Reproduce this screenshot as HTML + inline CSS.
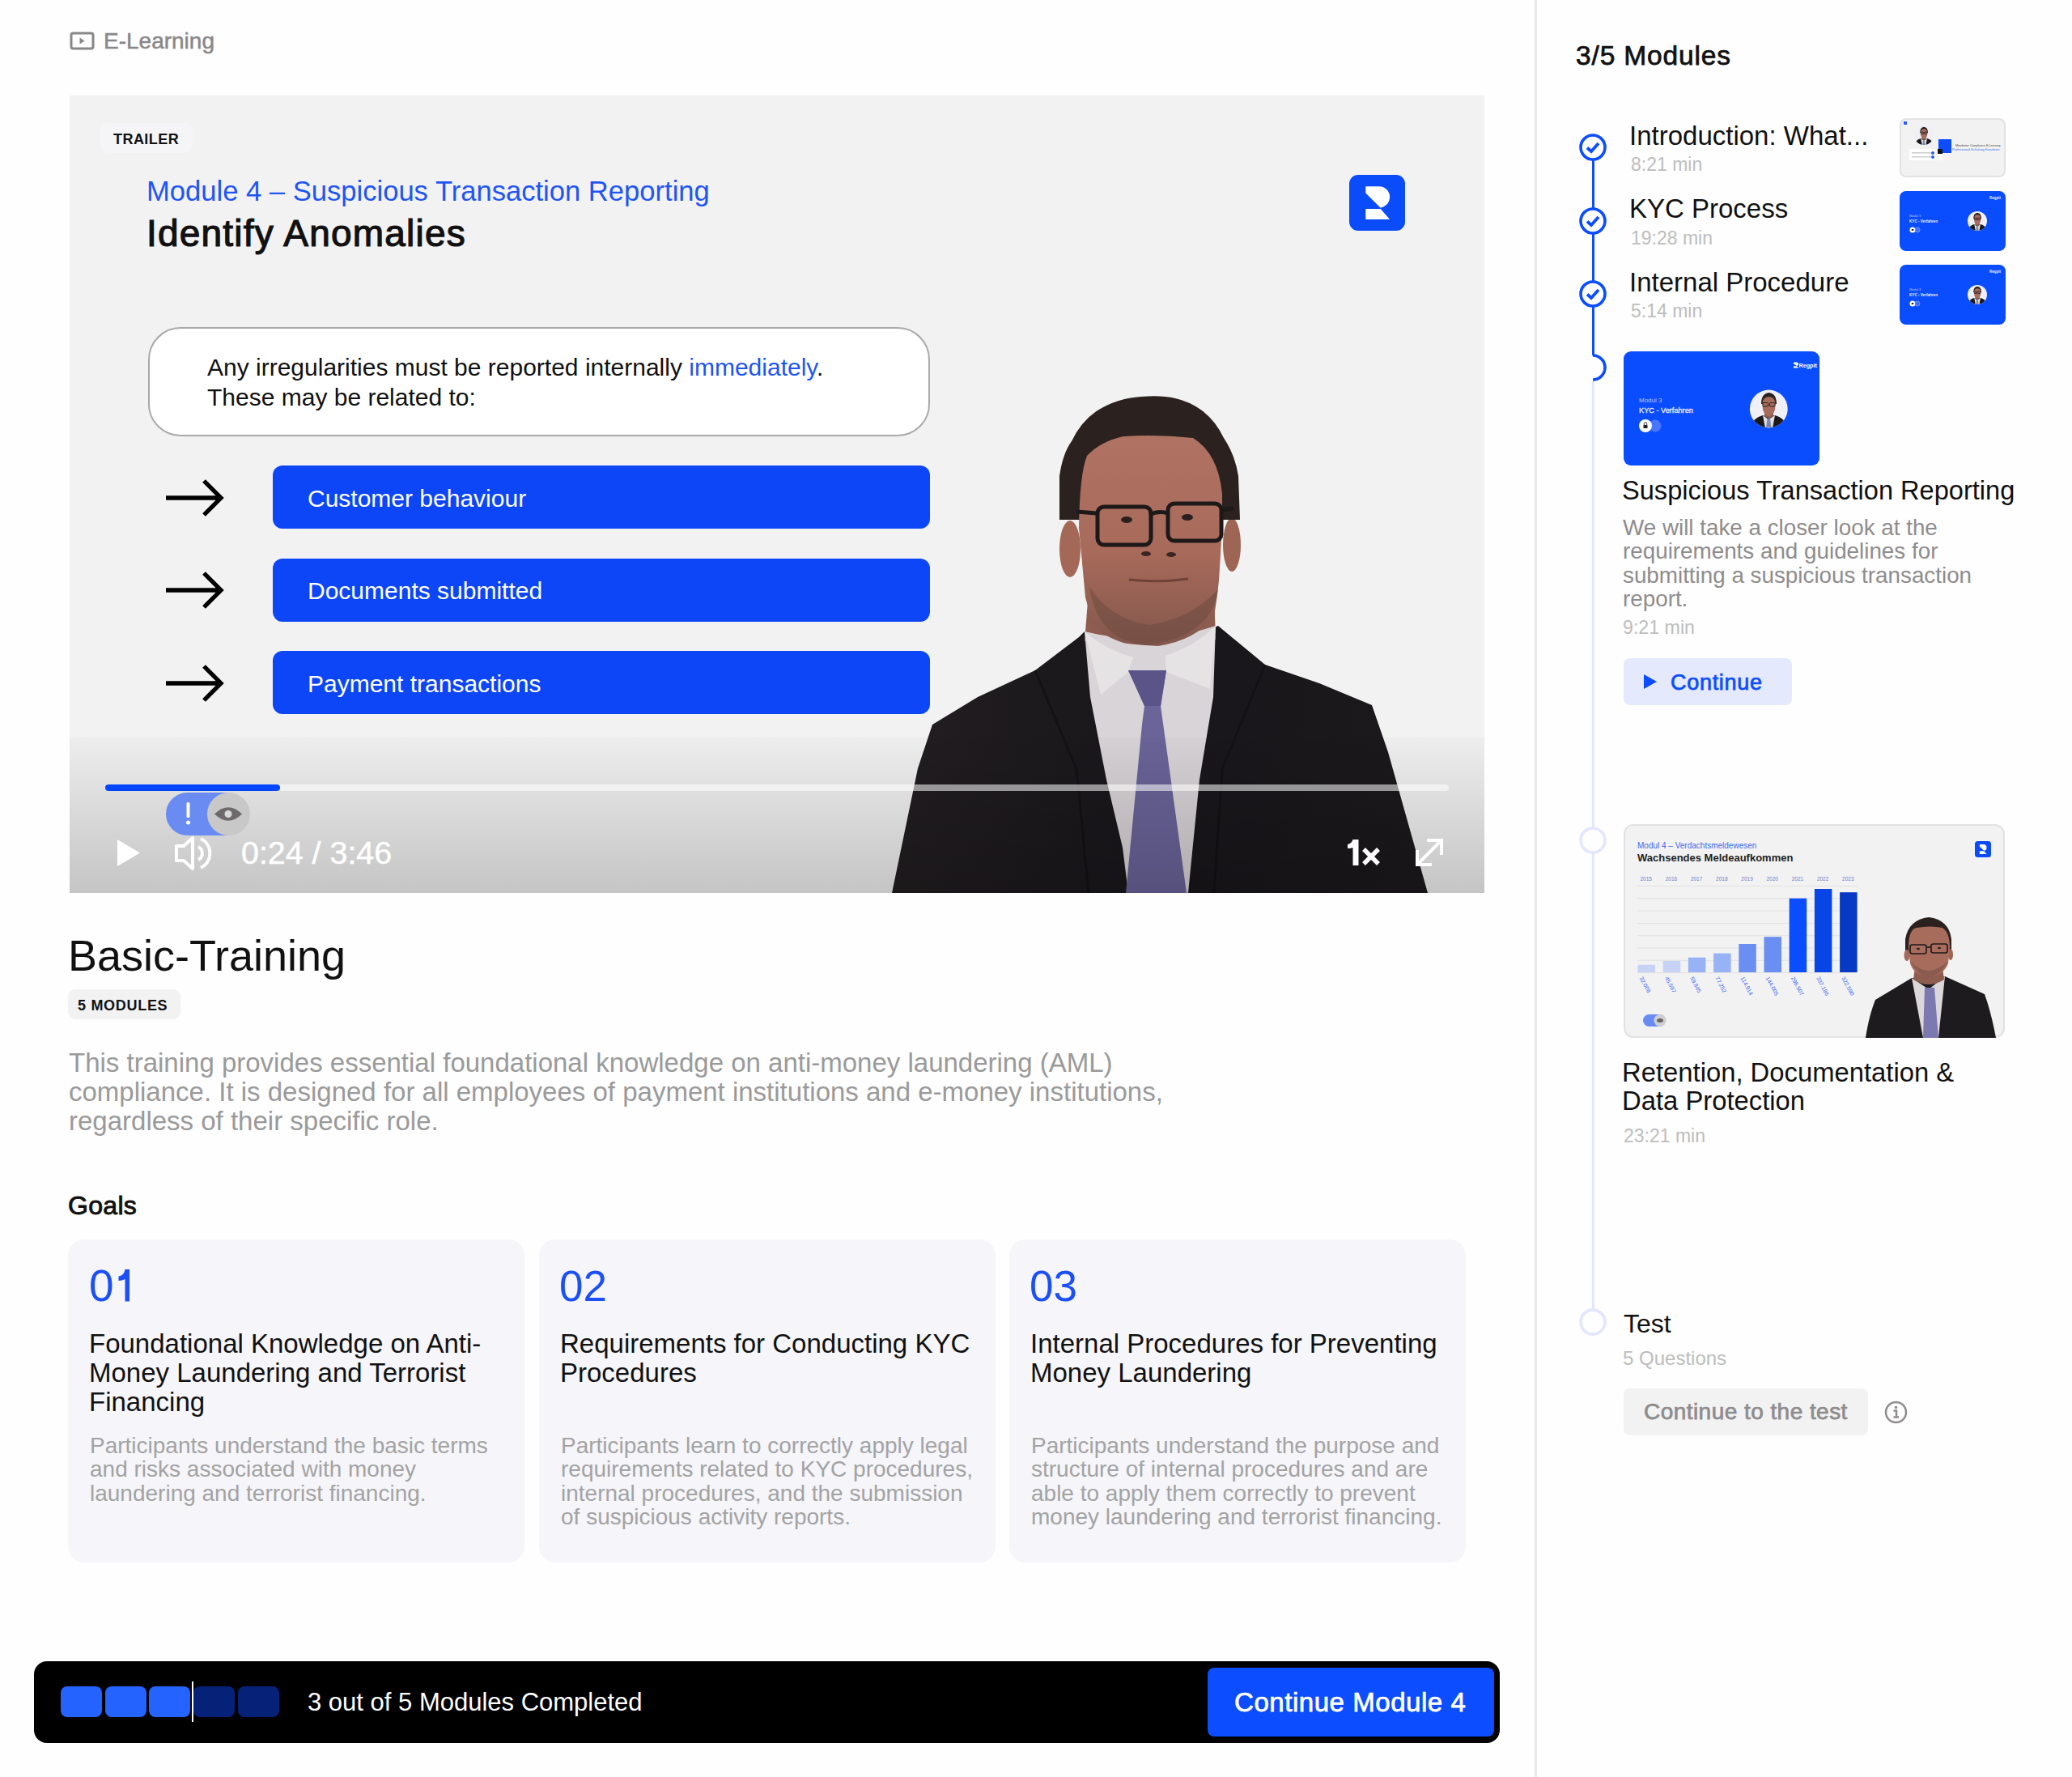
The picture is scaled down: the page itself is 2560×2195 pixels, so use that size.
<!DOCTYPE html>
<html><head><meta charset="utf-8"><style>
html,body{margin:0;padding:0;}
body{width:2560px;height:2195px;position:relative;overflow:hidden;background:#fefefe;font-family:"Liberation Sans",sans-serif;}
.a{position:absolute;}
</style></head><body>
<svg class="a" style="left:86px;top:39px" width="31" height="23" viewBox="0 0 31 23"><rect x="2" y="2" width="27" height="19" rx="2.5" fill="none" stroke="#8a8788" stroke-width="3"/><path d="M12.5 7.5 L18.5 11.5 L12.5 15.5Z" fill="#8a8788"/></svg>
<div class="a" style="left:128px;top:34.30px;font-size:28px;line-height:34px;color:#8a8788;font-weight:400;-webkit-text-stroke:0.5px currentColor;white-space:nowrap;">E-Learning</div>
<div class="a" style="left:86px;top:118px;width:1748px;height:985px;background:#f2f2f2;overflow:hidden">
<div class="a" style="left:38px;top:34px;width:114px;height:37px;background:#f5f5f8;border-radius:9px;"></div>
<div class="a" style="left:54px;top:42.76px;font-size:18px;line-height:22px;color:#111;font-weight:700;white-space:nowrap;letter-spacing:0.45px;">TRAILER</div>
<div class="a" style="left:95px;top:97.01px;font-size:34.6px;line-height:42px;color:#1f55f2;font-weight:400;white-space:nowrap;">Module 4 – Suspicious Transaction Reporting</div>
<div class="a" style="left:95px;top:142.56px;font-size:46px;line-height:55px;color:#111;font-weight:400;-webkit-text-stroke:1.2px currentColor;white-space:nowrap;letter-spacing:1.2px;">Identify Anomalies</div>
<div class="a" style="left:1581px;top:98px;width:69px;height:69px;background:#0b4cfa;border-radius:11px;"></div>
<svg class="a" style="left:1581px;top:98px" width="69" height="69" viewBox="0 0 69 69"><path d="M20.3,14.2 H36.5 A13.2,13.2 0 0 1 38.5,40.5 L20.3,22.6 Z" fill="#fff"/><path d="M20.3,41.9 H38.8 L50,55 H20.3 Z" fill="#fff"/></svg>
<div class="a" style="left:97px;top:286px;width:966px;height:135px;background:#fff;border-radius:40px;box-sizing:border-box;border:2px solid #a9a9a9;"></div>
<div class="a" style="left:170px;top:317.61px;font-size:30px;line-height:36px;color:#111;font-weight:400;white-space:nowrap;">Any irregularities must be reported internally <span style="color:#1f55f2">immediately</span>.</div>
<div class="a" style="left:170px;top:354.61px;font-size:30px;line-height:36px;color:#111;font-weight:400;white-space:nowrap;">These may be related to:</div>
<svg class="a" style="left:117px;top:472.70000000000005px" width="74" height="48" viewBox="0 0 74 48"><path d="M2 24 H70 M49 3 L70 24 L49 45" fill="none" stroke="#000" stroke-width="5.3"/></svg>
<div class="a" style="left:251px;top:457.0px;width:812px;height:78px;background:#0c46f7;border-radius:12px;"></div>
<div class="a" style="left:294px;top:479.61px;font-size:30px;line-height:36px;color:#fff;font-weight:400;white-space:nowrap;">Customer behaviour</div>
<svg class="a" style="left:117px;top:587.2px" width="74" height="48" viewBox="0 0 74 48"><path d="M2 24 H70 M49 3 L70 24 L49 45" fill="none" stroke="#000" stroke-width="5.3"/></svg>
<div class="a" style="left:251px;top:571.5px;width:812px;height:78px;background:#0c46f7;border-radius:12px;"></div>
<div class="a" style="left:294px;top:594.11px;font-size:30px;line-height:36px;color:#fff;font-weight:400;white-space:nowrap;">Documents submitted</div>
<svg class="a" style="left:117px;top:701.7px" width="74" height="48" viewBox="0 0 74 48"><path d="M2 24 H70 M49 3 L70 24 L49 45" fill="none" stroke="#000" stroke-width="5.3"/></svg>
<div class="a" style="left:251px;top:686.0px;width:812px;height:78px;background:#0c46f7;border-radius:12px;"></div>
<div class="a" style="left:294px;top:708.61px;font-size:30px;line-height:36px;color:#fff;font-weight:400;white-space:nowrap;">Payment transactions</div>
<svg class="a" style="left:0;top:0" width="1748" height="985" viewBox="86 118 1748 985">
<defs><linearGradient id="sk" x1="0" y1="0" x2="0" y2="1"><stop offset="0" stop-color="#b07262"/><stop offset="0.55" stop-color="#a86a5a"/><stop offset="1" stop-color="#83574c"/></linearGradient>
<linearGradient id="st" x1="0" y1="0" x2="1" y2="0"><stop offset="0" stop-color="#221e21"/><stop offset="0.5" stop-color="#18161a"/><stop offset="1" stop-color="#1c191c"/></linearGradient></defs>
<path d="M1340,780 L1333,787 L1279,828 L1208,861 L1152,895 L1134,949 L1102,1103 L1764,1103 L1715,929 L1695,871 L1630,844 L1563,821 L1505,773 Q1420,815 1340,780 Z" fill="url(#st)"/>
<path d="M1345,730 L1500,730 L1502,790 Q1420,818 1340,792Z" fill="#8f5d50"/>
<path d="M1340,780 Q1420,800 1502,773 L1499,861 L1482,963 L1468,1103 L1394,1103 L1387,1047 L1367,963 L1347,861 Z" fill="#d9d4d7"/>
<path d="M1340,780 Q1365,802 1400,812 L1394,830 L1360,858 Z" fill="#e6e3e5"/><path d="M1502,773 Q1478,797 1440,810 L1441,830 L1495,851Z" fill="#e6e3e5"/>
<path d="M1394,828 L1441,828 L1434,872 L1466,1103 L1391,1103 L1411,895 L1414,872 Z" fill="#6a6499"/>
<path d="M1394,828 L1441,828 L1434,872 L1414,872 Z" fill="#5a5488"/>
<path d="M1279,828 L1330,950 L1345,1103" fill="none" stroke="#0f0d10" stroke-width="3" opacity="0.6"/>
<path d="M1563,821 L1510,950 L1500,1103" fill="none" stroke="#0f0d10" stroke-width="3" opacity="0.6"/>
<ellipse cx="1322" cy="678" rx="13" ry="35" fill="#a46858"/><ellipse cx="1522" cy="673" rx="11" ry="33" fill="#9e6454"/>
<path d="M1309,642 L1309,588 Q1313,560 1324,545 Q1336,520 1356,507 Q1380,492 1410,490 Q1435,488 1452,492 Q1470,496 1485,507 Q1502,520 1512,541 Q1526,562 1530,588 L1532,642 Z" fill="#2b2220"/><path d="M1333,652 Q1334,585 1343,563 Q1360,545 1388,539 Q1430,536 1474,541 Q1505,560 1510,610 L1510,652 L1506,717 Q1503,745 1500,760 Q1480,790 1431,798 Q1395,796 1388,794 Q1360,785 1350,770 L1341,738 Z" fill="url(#sk)"/>
<path d="M1346,725 Q1356,792 1418,797 Q1498,785 1505,728 Q1470,765 1420,772 Q1372,765 1346,725Z" fill="#6e4a42" opacity="0.55"/>

<g fill="none" stroke="#1d1919" stroke-width="5"><rect x="1356" y="626" width="66" height="47" rx="8"/><rect x="1443" y="622" width="66" height="46" rx="8"/><path d="M1420,636 Q1431,630 1443,634"/><path d="M1355,634 L1330,632"/><path d="M1508,630 L1524,628"/></g>
<ellipse cx="1392" cy="642" rx="7" ry="4" fill="#2a1f1e"/><ellipse cx="1467" cy="639" rx="7" ry="4" fill="#2a1f1e"/>
<ellipse cx="1416" cy="684" rx="6" ry="3" fill="#3a2522"/><ellipse cx="1447" cy="685" rx="6" ry="3" fill="#3a2522"/>
<path d="M1395,716 Q1430,720 1468,715" fill="none" stroke="#6f4238" stroke-width="3"/>
</svg>
<div class="a" style="left:0px;top:793px;width:1748px;height:192px;background:linear-gradient(rgba(0,0,0,0.02),rgba(0,0,0,0.19));border-radius:0px;"></div>
<div class="a" style="left:44px;top:851px;width:1660px;height:8px;background:rgba(255,255,255,0.55);border-radius:4px;"></div>
<div class="a" style="left:44px;top:851px;width:216px;height:8px;background:#0046ff;border-radius:4px;"></div>
<div class="a" style="left:119px;top:861px;width:100px;height:53px;background:#6a8cf2;border-radius:27px;"></div>
<div class="a" style="left:170px;top:861px;width:53px;height:53px;background:#c8c8c8;border-radius:27px;"></div>
<svg class="a" style="left:119px;top:861px" width="104" height="53" viewBox="0 0 104 53"><rect x="25.5" y="12" width="4" height="19" rx="1.5" fill="#fff"/><circle cx="27.5" cy="37" r="2.5" fill="#fff"/><path d="M60 26.5 Q77 10 94 26.5 Q77 43 60 26.5Z" fill="#6e6a6b"/><circle cx="77" cy="26.5" r="4.5" fill="#d8d8d8"/></svg>
<svg class="a" style="left:59px;top:919px" width="28" height="33" viewBox="0 0 28 33"><path d="M0 0 L28 16.5 L0 33Z" fill="#fff"/></svg>
<svg class="a" style="left:129px;top:914px" width="50" height="44" viewBox="0 0 50 44"><path d="M23 3 L12 13 H3 V31 H12 L23 41Z" fill="none" stroke="#fff" stroke-width="4" stroke-linejoin="round"/><path d="M30 14 A9 9 0 0 1 30 30" fill="none" stroke="#fff" stroke-width="4"/><path d="M33 4 A20 20 0 0 1 33 40" fill="none" stroke="#fff" stroke-width="4"/></svg>
<div class="a" style="left:212px;top:911.85px;font-size:39.4px;line-height:47px;color:#fff;font-weight:400;-webkit-text-stroke:0.5px currentColor;white-space:nowrap;">0:24 / 3:46</div>
<svg class="a" style="left:1574px;top:916px" width="50" height="40" viewBox="1660 1034 50 40"><path d="M1671.5,1037 H1678.5 V1069 H1671.5 V1047 Q1669,1048 1665,1048 V1043 Q1670,1042 1671.5,1037Z" fill="#fff"/><path d="M1685,1049 L1703,1067 M1703,1049 L1685,1067" stroke="#fff" stroke-width="5.5"/></svg>
<svg class="a" style="left:1663px;top:918px" width="34" height="34" viewBox="0 0 34 34"><path d="M14 2 H32 V20 M32 2 L3 31 M2 14 V32 H20" fill="none" stroke="#fff" stroke-width="4"/></svg>
</div>
<div class="a" style="left:84px;top:1147.79px;font-size:54px;line-height:65px;color:#111;font-weight:400;white-space:nowrap;">Basic-Training</div>
<div class="a" style="left:84px;top:1222px;width:139px;height:37px;background:#f2f2f2;border-radius:9px;"></div>
<div class="a" style="left:96px;top:1230.76px;font-size:18px;line-height:22px;color:#111;font-weight:700;white-space:nowrap;letter-spacing:0.7px;">5 MODULES</div>
<div class="a" style="left:85px;top:1294.57px;font-size:33px;line-height:36px;color:#9a9a9a;font-weight:400;width:1400px;">This training provides essential foundational knowledge on anti-money laundering (AML) compliance. It is designed for all employees of payment institutions and e-money institutions, regardless of their specific role.</div>
<div class="a" style="left:84px;top:1470.41px;font-size:32px;line-height:38px;color:#111;font-weight:400;-webkit-text-stroke:0.9px currentColor;white-space:nowrap;letter-spacing:0.3px;">Goals</div>
<div class="a" style="left:84px;top:1531px;width:564px;height:399px;background:#f5f5fa;border-radius:20px;"></div>
<div class="a" style="left:110px;top:1554.94px;font-size:55px;line-height:66px;color:#1c50f5;font-weight:400;white-space:nowrap;">0</div>
<svg class="a" style="left:144px;top:1565px" width="20" height="45" viewBox="0 0 20 45"><path d="M10.5,3 H16 V42.5 H10.5 V15 Q7,17 2.5,17 V11.5 Q9,11 10.5,3Z" fill="#1c50f5"/></svg>
<div class="a" style="left:110px;top:1641.57px;font-size:33px;line-height:36px;color:#111;font-weight:400;width:530px;">Foundational Knowledge on Anti-Money Laundering and Terrorist Financing</div>
<div class="a" style="left:111px;top:1770.55px;font-size:28px;line-height:29.5px;color:#a3a3a3;font-weight:400;width:525px;">Participants understand the basic terms and risks associated with money laundering and terrorist financing.</div>
<div class="a" style="left:666px;top:1531px;width:564px;height:399px;background:#f5f5fa;border-radius:20px;"></div>
<div class="a" style="left:691px;top:1556.64px;font-size:53px;line-height:64px;color:#1c50f5;font-weight:400;white-space:nowrap;">02</div>
<div class="a" style="left:692px;top:1641.57px;font-size:33px;line-height:36px;color:#111;font-weight:400;width:530px;">Requirements for Conducting KYC Procedures</div>
<div class="a" style="left:693px;top:1770.55px;font-size:28px;line-height:29.5px;color:#a3a3a3;font-weight:400;width:525px;">Participants learn to correctly apply legal requirements related to KYC procedures, internal procedures, and the submission of suspicious activity reports.</div>
<div class="a" style="left:1247px;top:1531px;width:564px;height:399px;background:#f5f5fa;border-radius:20px;"></div>
<div class="a" style="left:1272px;top:1556.64px;font-size:53px;line-height:64px;color:#1c50f5;font-weight:400;white-space:nowrap;">03</div>
<div class="a" style="left:1273px;top:1641.57px;font-size:33px;line-height:36px;color:#111;font-weight:400;width:530px;">Internal Procedures for Preventing Money Laundering</div>
<div class="a" style="left:1274px;top:1770.55px;font-size:28px;line-height:29.5px;color:#a3a3a3;font-weight:400;width:525px;">Participants understand the purpose and structure of internal procedures and are able to apply them correctly to prevent money laundering and terrorist financing.</div>
<div class="a" style="left:42px;top:2052px;width:1811px;height:101px;background:#000;border-radius:16px;"></div>
<div class="a" style="left:75.0px;top:2083px;width:51px;height:38px;background:#2563ff;border-radius:8px;"></div>
<div class="a" style="left:129.7px;top:2083px;width:51px;height:38px;background:#2563ff;border-radius:8px;"></div>
<div class="a" style="left:184.4px;top:2083px;width:51px;height:38px;background:#2563ff;border-radius:8px;"></div>
<div class="a" style="left:239.10000000000002px;top:2083px;width:51px;height:38px;background:#062178;border-radius:8px;"></div>
<div class="a" style="left:293.8px;top:2083px;width:51px;height:38px;background:#062178;border-radius:8px;"></div>
<div class="a" style="left:237px;top:2077px;width:2px;height:50px;background:#fff;border-radius:0px;"></div>
<div class="a" style="left:380px;top:2083.76px;font-size:31px;line-height:37px;color:#fff;font-weight:400;white-space:nowrap;">3 out of 5 Modules Completed</div>
<div class="a" style="left:1492px;top:2060px;width:354px;height:85px;background:#0b4dff;border-radius:8px;"></div>
<div class="a" style="left:1525px;top:2082.57px;font-size:33px;line-height:40px;color:#fff;font-weight:400;-webkit-text-stroke:0.75px currentColor;white-space:nowrap;letter-spacing:0.55px;">Continue Module 4</div>
<div class="a" style="left:1896px;top:0px;width:3px;height:2195px;background:#e9e9e9;border-radius:0px;"></div>
<div class="a" style="left:1947px;top:49.39px;font-size:33.5px;line-height:40px;color:#111;font-weight:400;-webkit-text-stroke:0.75px currentColor;white-space:nowrap;letter-spacing:0.85px;">3/5 Modules</div>
<div class="a" style="left:1966.5px;top:198px;width:3px;height:241px;background:#0b4dff;border-radius:0px;"></div>
<div class="a" style="left:1966.5px;top:471px;width:3px;height:1146px;background:#e3e7fd;border-radius:0px;"></div>
<svg class="a" style="left:1949px;top:163px" width="38" height="38" viewBox="0 0 38 38"><circle cx="19" cy="19" r="15" fill="#fefefe" stroke="#0b4dff" stroke-width="3.6"/><path d="M12 19.5 L17 24 L26 14" fill="none" stroke="#0b4dff" stroke-width="3.8"/></svg>
<svg class="a" style="left:1949px;top:253.5px" width="38" height="38" viewBox="0 0 38 38"><circle cx="19" cy="19" r="15" fill="#fefefe" stroke="#0b4dff" stroke-width="3.6"/><path d="M12 19.5 L17 24 L26 14" fill="none" stroke="#0b4dff" stroke-width="3.8"/></svg>
<svg class="a" style="left:1949px;top:344px" width="38" height="38" viewBox="0 0 38 38"><circle cx="19" cy="19" r="15" fill="#fefefe" stroke="#0b4dff" stroke-width="3.6"/><path d="M12 19.5 L17 24 L26 14" fill="none" stroke="#0b4dff" stroke-width="3.8"/></svg>
<svg class="a" style="left:1949px;top:435px" width="38" height="38" viewBox="0 0 38 38"><path d="M19 4 A15 15 0 0 1 19 34" fill="none" stroke="#0b4dff" stroke-width="3.6"/></svg>
<svg class="a" style="left:1949px;top:1019px" width="38" height="38" viewBox="0 0 38 38"><circle cx="19" cy="19" r="15" fill="#fefefe" stroke="#e3e7fd" stroke-width="3.6"/></svg>
<svg class="a" style="left:1949px;top:1613.6px" width="38" height="38" viewBox="0 0 38 38"><circle cx="19" cy="19" r="15" fill="#fefefe" stroke="#e3e7fd" stroke-width="3.6"/></svg>
<div class="a" style="left:2013px;top:147.57px;font-size:33px;line-height:40px;color:#111;font-weight:400;white-space:nowrap;">Introduction: What...</div>
<div class="a" style="left:2015px;top:189.03px;font-size:23px;line-height:28px;color:#bdbdbd;font-weight:400;white-space:nowrap;">8:21 min</div>
<div class="a" style="left:2347px;top:145.5px;width:131px;height:73px;background:#f2f2f2;border-radius:8px;box-sizing:border-box;border:2px solid #e2e2e2;"></div>
<svg class="a" style="left:2347px;top:145.5px" width="131" height="73" viewBox="0 0 131 73"><rect x="5" y="4" width="4" height="4" fill="#2b5cff"/><g transform="translate(30 21) scale(0.513) translate(-179.3 -71)"><circle cx="179.3" cy="71" r="23.4" fill="#eef0f6"/><g clip-path="url(#avc)"><path d="M156 94 Q160 82 172 79 L179 81 L187 79 Q199 82 203 94Z" fill="#1b181b"/><path d="M172 79 L179 84 L187 79 L184 95 L175 95Z" fill="#e2dee0"/><path d="M177.5 83 H181 L182.5 95 H176Z" fill="#7c86b0"/><path d="M174 74 H185 V80 L179.5 83 L174 80Z" fill="#8f5d50"/><path d="M170 65 Q170 52 179.5 51 Q189 52 189 65 Z" fill="#2b2220"/><path d="M171.5 66 Q171.5 56 179.5 56 Q187.5 56 187.5 66 L187 72 Q185 79 179.5 80 Q174 79 172 72Z" fill="#a86c5c"/><g fill="none" stroke="#222" stroke-width="1.6"><rect x="172" y="63.5" width="6.5" height="4.5" rx="1"/><rect x="180.5" y="63.5" width="6.5" height="4.5" rx="1"/></g></g></g><rect x="12" y="38" width="41" height="14" fill="#fff"/><rect x="15" y="42" width="24" height="1.5" fill="#ccc"/><rect x="15" y="47" width="24" height="1.5" fill="#ccc"/><circle cx="41" cy="43" r="2" fill="#2b5cff"/><circle cx="41" cy="48" r="2" fill="#2b5cff"/><rect x="48" y="26" width="16" height="17" fill="#0b4dff"/><rect x="47" y="38" width="6" height="6" fill="#111"/><text x="69" y="35" font-family="Liberation Sans" font-size="3.6" fill="#444">Mitarbeiter Compliance E-Learning</text><text x="65" y="40" font-family="Liberation Sans" font-size="4" fill="#3b6af0">Professional Schulung Kanzleien</text></svg>
<div class="a" style="left:2013px;top:238.07px;font-size:33px;line-height:40px;color:#111;font-weight:400;white-space:nowrap;">KYC Process</div>
<div class="a" style="left:2015px;top:279.53px;font-size:23px;line-height:28px;color:#bdbdbd;font-weight:400;white-space:nowrap;">19:28 min</div>
<div class="a" style="left:2347px;top:236px;width:131px;height:74px;background:#0a4dff;border-radius:8px;"></div>
<svg class="a" style="left:2347px;top:236px" width="131" height="74" viewBox="0 0 131 74"><text x="12" y="32" font-family="Liberation Sans" font-size="4" fill="#b8c8ff">Modul 3</text><text x="12" y="39" font-family="Liberation Sans" font-size="4.6" font-weight="700" fill="#e8eeff">KYC - Verfahren</text><circle cx="16" cy="48" r="3.5" fill="#fff"/><rect x="14.8" y="47" width="2.4" height="2" fill="#222"/><circle cx="22" cy="48" r="3" fill="#3f6fff" stroke="#7f9cff" stroke-width="0.8"/><text x="111" y="10" font-family="Liberation Sans" font-size="4.5" font-weight="700" fill="#e4eaff">Regpit</text><g transform="translate(96 37) scale(0.513) translate(-179.3 -71)"><circle cx="179.3" cy="71" r="23.4" fill="#eef0f6"/><g clip-path="url(#avc)"><path d="M156 94 Q160 82 172 79 L179 81 L187 79 Q199 82 203 94Z" fill="#1b181b"/><path d="M172 79 L179 84 L187 79 L184 95 L175 95Z" fill="#e2dee0"/><path d="M177.5 83 H181 L182.5 95 H176Z" fill="#7c86b0"/><path d="M174 74 H185 V80 L179.5 83 L174 80Z" fill="#8f5d50"/><path d="M170 65 Q170 52 179.5 51 Q189 52 189 65 Z" fill="#2b2220"/><path d="M171.5 66 Q171.5 56 179.5 56 Q187.5 56 187.5 66 L187 72 Q185 79 179.5 80 Q174 79 172 72Z" fill="#a86c5c"/><g fill="none" stroke="#222" stroke-width="1.6"><rect x="172" y="63.5" width="6.5" height="4.5" rx="1"/><rect x="180.5" y="63.5" width="6.5" height="4.5" rx="1"/></g></g></g></svg>
<div class="a" style="left:2013px;top:328.57px;font-size:33px;line-height:40px;color:#111;font-weight:400;white-space:nowrap;">Internal Procedure</div>
<div class="a" style="left:2015px;top:370.03px;font-size:23px;line-height:28px;color:#bdbdbd;font-weight:400;white-space:nowrap;">5:14 min</div>
<div class="a" style="left:2347px;top:326.6px;width:131px;height:74px;background:#0a4dff;border-radius:8px;"></div>
<svg class="a" style="left:2347px;top:326.6px" width="131" height="74" viewBox="0 0 131 74"><text x="12" y="32" font-family="Liberation Sans" font-size="4" fill="#b8c8ff">Modul 3</text><text x="12" y="39" font-family="Liberation Sans" font-size="4.6" font-weight="700" fill="#e8eeff">KYC - Verfahren</text><circle cx="16" cy="48" r="3.5" fill="#fff"/><rect x="14.8" y="47" width="2.4" height="2" fill="#222"/><circle cx="22" cy="48" r="3" fill="#3f6fff" stroke="#7f9cff" stroke-width="0.8"/><text x="111" y="10" font-family="Liberation Sans" font-size="4.5" font-weight="700" fill="#e4eaff">Regpit</text><g transform="translate(96 37) scale(0.513) translate(-179.3 -71)"><circle cx="179.3" cy="71" r="23.4" fill="#eef0f6"/><g clip-path="url(#avc)"><path d="M156 94 Q160 82 172 79 L179 81 L187 79 Q199 82 203 94Z" fill="#1b181b"/><path d="M172 79 L179 84 L187 79 L184 95 L175 95Z" fill="#e2dee0"/><path d="M177.5 83 H181 L182.5 95 H176Z" fill="#7c86b0"/><path d="M174 74 H185 V80 L179.5 83 L174 80Z" fill="#8f5d50"/><path d="M170 65 Q170 52 179.5 51 Q189 52 189 65 Z" fill="#2b2220"/><path d="M171.5 66 Q171.5 56 179.5 56 Q187.5 56 187.5 66 L187 72 Q185 79 179.5 80 Q174 79 172 72Z" fill="#a86c5c"/><g fill="none" stroke="#222" stroke-width="1.6"><rect x="172" y="63.5" width="6.5" height="4.5" rx="1"/><rect x="180.5" y="63.5" width="6.5" height="4.5" rx="1"/></g></g></g></svg>
<div class="a" style="left:2006px;top:434px;width:242px;height:141px;background:#0a4dff;border-radius:9px;"></div>
<svg class="a" style="left:2006px;top:434px" width="242" height="141" viewBox="0 0 242 141"><text x="19" y="63" font-family="Liberation Sans" font-size="8" fill="#b8c8ff">Modul 3</text><text x="19" y="76" font-family="Liberation Sans" font-size="9.2" fill="#e8eeff" stroke="#e8eeff" stroke-width="0.3">KYC - Verfahren</text><circle cx="39" cy="92" r="7.5" fill="#4f7bff" opacity="0.9"/><circle cx="27" cy="92" r="8" fill="#fff"/><rect x="24.5" y="91" width="5" height="4" rx="0.5" fill="#222"/><path d="M25.3 91 V89.5 A1.7 1.7 0 0 1 28.7 89.5 V91" fill="none" stroke="#222" stroke-width="0.9"/><path d="M210 13.5 H213.5 A2.2 2.2 0 0 1 214 18 L210 15.3Z M210 18.3 H214 L216 20.5 H210Z" fill="#fff"/><text x="216.5" y="20" font-family="Liberation Sans" font-size="7.2" font-weight="700" fill="#fff">Regpit</text><defs><clipPath id="avc"><circle cx="179.3" cy="71" r="23.4"/></clipPath></defs><circle cx="179.3" cy="71" r="23.4" fill="#eef0f6"/><g clip-path="url(#avc)"><path d="M156 94 Q160 82 172 79 L179 81 L187 79 Q199 82 203 94Z" fill="#1b181b"/><path d="M172 79 L179 84 L187 79 L184 95 L175 95Z" fill="#e2dee0"/><path d="M177.5 83 H181 L182.5 95 H176Z" fill="#7c86b0"/><path d="M174 74 H185 V80 L179.5 83 L174 80Z" fill="#8f5d50"/><path d="M170 65 Q170 52 179.5 51 Q189 52 189 65 Z" fill="#2b2220"/><path d="M171.5 66 Q171.5 56 179.5 56 Q187.5 56 187.5 66 L187 72 Q185 79 179.5 80 Q174 79 172 72Z" fill="#a86c5c"/><g fill="none" stroke="#222" stroke-width="1"><rect x="172" y="63.5" width="6.5" height="4.5" rx="1"/><rect x="180.5" y="63.5" width="6.5" height="4.5" rx="1"/></g></g></svg>
<div class="a" style="left:2004px;top:586.20px;font-size:32.6px;line-height:39px;color:#111;font-weight:400;white-space:nowrap;">Suspicious Transaction Reporting</div>
<div class="a" style="left:2005px;top:636.57px;font-size:27.8px;line-height:29.6px;color:#8f8c8d;font-weight:400;width:470px;">We will take a closer look at the requirements and guidelines for submitting a suspicious transaction report.</div>
<div class="a" style="left:2005px;top:760.96px;font-size:23.2px;line-height:28px;color:#bdbdbd;font-weight:400;white-space:nowrap;">9:21 min</div>
<div class="a" style="left:2006px;top:813px;width:208px;height:58px;background:#e5e9fd;border-radius:8px;"></div>
<svg class="a" style="left:2030px;top:832px" width="18" height="20" viewBox="0 0 18 20"><path d="M1 1 L17 10 L1 19Z" fill="#0b4dff"/></svg>
<div class="a" style="left:2064px;top:826.64px;font-size:27px;line-height:32px;color:#0b4dff;font-weight:400;-webkit-text-stroke:0.75px currentColor;white-space:nowrap;letter-spacing:0.7px;">Continue</div>
<div class="a" style="left:2006px;top:1018px;width:471px;height:264px;background:#f2f2f2;border-radius:12px;box-sizing:border-box;border:2px solid #e2e2e2;overflow:hidden;"></div>
<svg class="a" style="left:2006px;top:1018px" width="471" height="264" viewBox="2006 1018 471 264"><text x="2023" y="1048" font-family="Liberation Sans" font-size="10" fill="#3b6af0">Modul 4 – Verdachtsmeldewesen</text><text x="2023" y="1064" font-family="Liberation Sans" font-size="13" font-weight="700" fill="#222">Wachsendes Meldeaufkommen</text><rect x="2440" y="1039" width="20" height="20" rx="3.5" fill="#0b4cfa"/><g transform="translate(2440 1039) scale(0.29)"><path d="M20.3,14.2 H36.5 A13.2,13.2 0 0 1 38.5,40.5 L20.3,22.6 Z" fill="#fff"/><path d="M20.3,41.9 H38.8 L50,55 H20.3 Z" fill="#fff"/></g><rect x="2023" y="1094.0" width="272" height="1" fill="#e0e0e0"/><rect x="2023" y="1109.3" width="272" height="1" fill="#e0e0e0"/><rect x="2023" y="1124.6" width="272" height="1" fill="#e0e0e0"/><rect x="2023" y="1139.9" width="272" height="1" fill="#e0e0e0"/><rect x="2023" y="1155.2" width="272" height="1" fill="#e0e0e0"/><rect x="2023" y="1170.5" width="272" height="1" fill="#e0e0e0"/><rect x="2023" y="1185.8" width="272" height="1" fill="#e0e0e0"/><rect x="2023" y="1201.1" width="272" height="1" fill="#e0e0e0"/><rect x="2023.5" y="1191.8" width="21.5" height="9.2" fill="#c6d3f7"/><text x="2026.5" y="1088" font-family="Liberation Sans" font-size="6.5" fill="#6a7fc8">2015</text><text x="2025.5" y="1208" font-family="Liberation Sans" font-size="7" fill="#3b6af0" transform="rotate(62 2025.5 1208)">32.008</text><rect x="2054.7" y="1187" width="21.5" height="14.0" fill="#c6d3f7"/><text x="2057.7" y="1088" font-family="Liberation Sans" font-size="6.5" fill="#6a7fc8">2016</text><text x="2056.7" y="1208" font-family="Liberation Sans" font-size="7" fill="#3b6af0" transform="rotate(62 2056.7 1208)">45.597</text><rect x="2085.9" y="1182.7" width="21.5" height="18.3" fill="#98b2f6"/><text x="2088.9" y="1088" font-family="Liberation Sans" font-size="6.5" fill="#6a7fc8">2017</text><text x="2087.9" y="1208" font-family="Liberation Sans" font-size="7" fill="#3b6af0" transform="rotate(62 2087.9 1208)">59.845</text><rect x="2117.1" y="1177.6" width="21.5" height="23.4" fill="#98b2f6"/><text x="2120.1" y="1088" font-family="Liberation Sans" font-size="6.5" fill="#6a7fc8">2018</text><text x="2119.1" y="1208" font-family="Liberation Sans" font-size="7" fill="#3b6af0" transform="rotate(62 2119.1 1208)">77.252</text><rect x="2148.3" y="1166" width="21.5" height="35.0" fill="#6b8ef2"/><text x="2151.3" y="1088" font-family="Liberation Sans" font-size="6.5" fill="#6a7fc8">2019</text><text x="2150.3" y="1208" font-family="Liberation Sans" font-size="7" fill="#3b6af0" transform="rotate(62 2150.3 1208)">114.914</text><rect x="2179.5" y="1157.2" width="21.5" height="43.8" fill="#6b8ef2"/><text x="2182.5" y="1088" font-family="Liberation Sans" font-size="6.5" fill="#6a7fc8">2020</text><text x="2181.5" y="1208" font-family="Liberation Sans" font-size="7" fill="#3b6af0" transform="rotate(62 2181.5 1208)">144.005</text><rect x="2210.7" y="1109.7" width="21.5" height="91.3" fill="#0a4dff"/><text x="2213.7" y="1088" font-family="Liberation Sans" font-size="6.5" fill="#6a7fc8">2021</text><text x="2212.7" y="1208" font-family="Liberation Sans" font-size="7" fill="#3b6af0" transform="rotate(62 2212.7 1208)">298.507</text><rect x="2241.9" y="1098" width="21.5" height="103.0" fill="#0845e6"/><text x="2244.9" y="1088" font-family="Liberation Sans" font-size="6.5" fill="#6a7fc8">2022</text><text x="2243.9" y="1208" font-family="Liberation Sans" font-size="7" fill="#3b6af0" transform="rotate(62 2243.9 1208)">337.186</text><rect x="2273.1" y="1102.2" width="21.5" height="98.8" fill="#073ac4"/><text x="2276.1" y="1088" font-family="Liberation Sans" font-size="6.5" fill="#6a7fc8">2023</text><text x="2275.1" y="1208" font-family="Liberation Sans" font-size="7" fill="#3b6af0" transform="rotate(62 2275.1 1208)">322.590</text><rect x="2030" y="1253" width="28" height="15" rx="7.5" fill="#6a8cf2"/><circle cx="2051" cy="1260.5" r="7.5" fill="#cfcfcf"/><ellipse cx="2051" cy="1260.5" rx="4" ry="2.5" fill="#666"/><path d="M2317,1235 L2362,1208 L2403,1206 L2452,1228 Q2460,1250 2466,1282 L2305,1282 Q2309,1255 2317,1235Z" fill="#1e1b1e"/><path d="M2362,1208 L2383,1222 L2403,1206 L2395,1282 L2376,1282Z" fill="#dcd8da"/><path d="M2378,1220 L2390,1220 L2395,1282 L2376,1282Z" fill="#7c78b0"/><path d="M2366,1195 L2400,1195 L2402,1210 Q2383,1222 2364,1210Z" fill="#8f5d50"/><path d="M2354,1182 L2354,1160 Q2358,1136 2383,1133 Q2408,1136 2411,1160 L2411,1182Z" fill="#2b2220"/><ellipse cx="2356" cy="1180" rx="3.5" ry="7" fill="#a36a5a"/><ellipse cx="2410" cy="1179" rx="3" ry="7" fill="#9e6454"/><path d="M2358,1170 Q2358,1148 2368,1146 Q2385,1143 2400,1146 Q2409,1152 2409,1170 L2407,1190 Q2402,1204 2383,1207 Q2364,1204 2360,1190Z" fill="#a86c5c"/><path d="M2361,1188 Q2370,1206 2383,1207 Q2398,1205 2406,1188 Q2395,1198 2383,1199 Q2370,1198 2361,1188Z" fill="#6e4a42" opacity="0.5"/><g fill="none" stroke="#1d1919" stroke-width="1.6"><rect x="2360" y="1167" width="20" height="11" rx="2.5"/><rect x="2386" y="1166" width="20" height="11" rx="2.5"/><path d="M2380,1170 L2386,1170"/></g><ellipse cx="2370" cy="1172" rx="2" ry="1.2" fill="#2a1f1e"/><ellipse cx="2396" cy="1171" rx="2" ry="1.2" fill="#2a1f1e"/></svg>
<div class="a" style="left:2004px;top:1306.83px;font-size:32.8px;line-height:35.6px;color:#111;font-weight:400;white-space:nowrap;">Retention, Documentation &amp;<br>Data Protection</div>
<div class="a" style="left:2006px;top:1389.03px;font-size:23px;line-height:28px;color:#bdbdbd;font-weight:400;white-space:nowrap;">23:21 min</div>
<div class="a" style="left:2006px;top:1615.91px;font-size:32px;line-height:38px;color:#111;font-weight:400;white-space:nowrap;">Test</div>
<div class="a" style="left:2005px;top:1663.18px;font-size:24px;line-height:29px;color:#bdbdbd;font-weight:400;white-space:nowrap;">5 Questions</div>
<div class="a" style="left:2006px;top:1715px;width:302px;height:58px;background:#f2f2f2;border-radius:8px;"></div>
<div class="a" style="left:2031px;top:1727.30px;font-size:28px;line-height:34px;color:#8f8c8d;font-weight:400;-webkit-text-stroke:0.75px currentColor;white-space:nowrap;letter-spacing:0.45px;">Continue to the test</div>
<svg class="a" style="left:2328px;top:1730px" width="29" height="29" viewBox="0 0 29 29"><circle cx="14.5" cy="14.5" r="12.5" fill="none" stroke="#8f8c8d" stroke-width="2.5"/><circle cx="14.5" cy="8.5" r="1.8" fill="#8f8c8d"/><path d="M11.5 12.5 H15 V20 M11.5 20.5 H18" fill="none" stroke="#8f8c8d" stroke-width="2.5"/></svg>
</body></html>
